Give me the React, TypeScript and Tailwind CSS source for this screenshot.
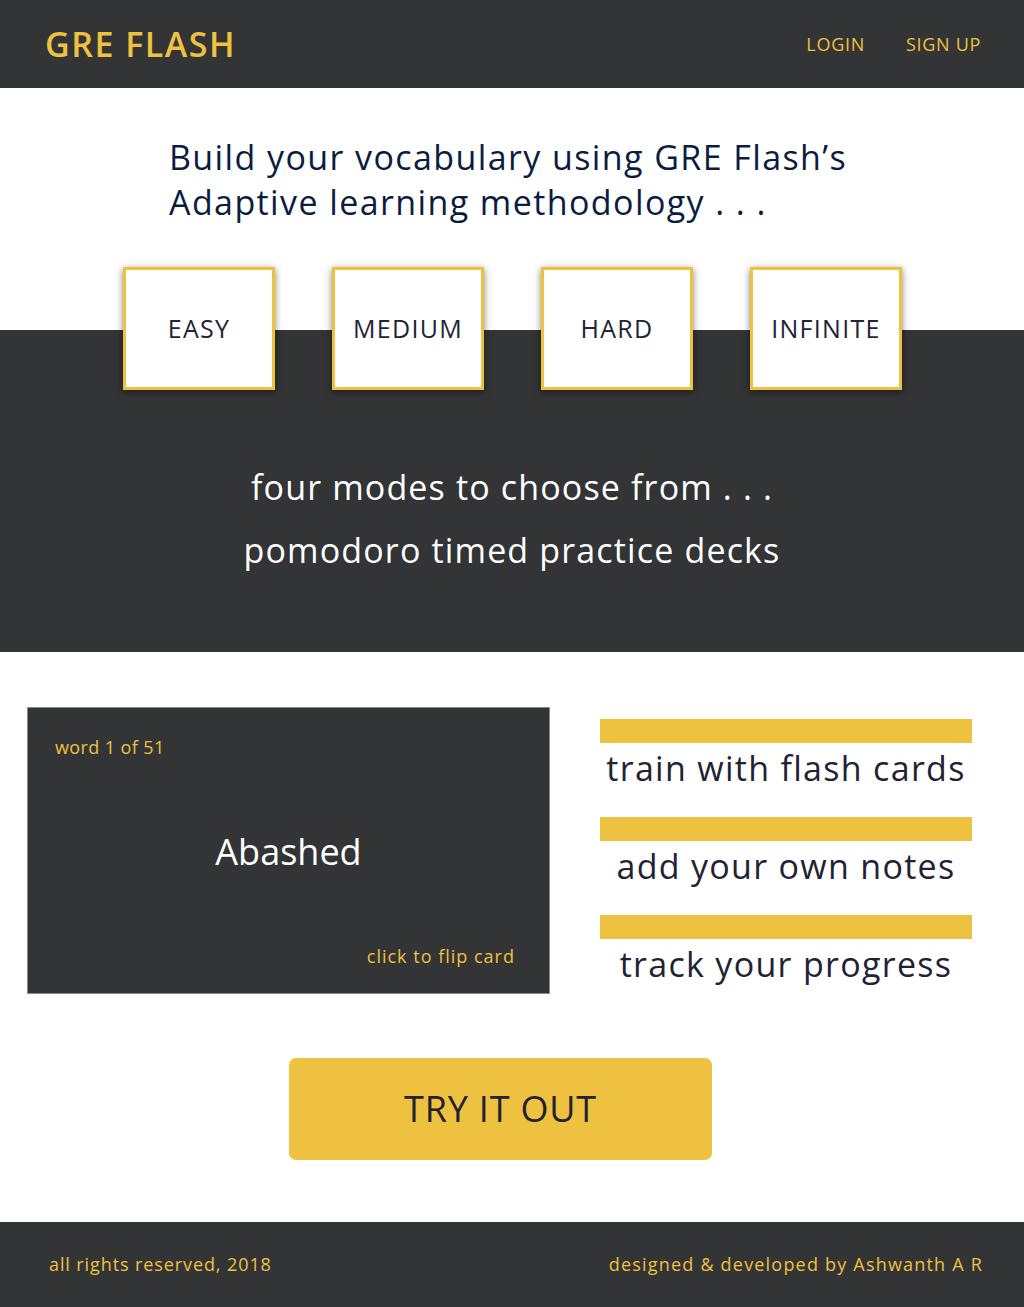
const modes = ['EASY', 'MEDIUM', 'HARD', 'INFINITE'];
const features = ['train with flash cards', 'add your own notes', 'track your progress'];

function Header() {
  return (
    <header className="h-[88px] bg-[#333436] flex items-center justify-between pl-[45px] pr-[43px]">
      <div className="text-[34px] leading-[40px] font-semibold tracking-[1.5px] text-[#eec140]">GRE FLASH</div>
      <nav className="flex items-center gap-[41px] text-[18px] tracking-[0.7px] text-[#eec140]">
        <a href="#">LOGIN</a>
        <a href="#">SIGN UP</a>
      </nav>
    </header>
  );
}

function Modes() {
  return (
    <section>
      <div className="bg-white pt-[47px] pb-[42px] pl-[169px]">
        <p className="text-[34px] leading-[45px] tracking-[1.4px] text-[#0b1d3f]">
          Build your vocabulary using GRE Flash’s
          <br />
          Adaptive learning methodology . . .
        </p>
      </div>
      <div className="bg-[linear-gradient(to_bottom,#ffffff_63px,#333436_63px)]">
        <div className="flex justify-center gap-[57px] pl-[1px]">
          {modes.map((m) => (
            <div
              key={m}
              className="w-[152px] h-[123px] bg-white border-[3px] border-[#eec140] shadow-[0_2px_7px_rgba(0,0,0,0.5)] flex items-center justify-center text-[25px] tracking-[1.3px] text-[#232336]"
            >
              {m}
            </div>
          ))}
        </div>
      </div>
      <div className="bg-[#333436] pt-[66px] pb-[70px] text-center text-white text-[34px] leading-[63px] tracking-[1.15px]">
        <p>four modes to choose from . . .</p>
        <p>pomodoro timed practice decks</p>
      </div>
    </section>
  );
}

function FlashCard() {
  return (
    <div className="w-[523px] h-[287px] bg-[#333436] border border-[#8a8a8a] flex flex-col px-[27px] pt-[27px] pb-[25px]">
      <div className="text-[18px] leading-[24px] tracking-[0.4px] text-[#eec140]">word 1 of 51</div>
      <div className="flex-1 flex items-center justify-center text-white text-[36px]">Abashed</div>
      <div className="text-right pr-[7px] text-[18px] leading-[24px] tracking-[1px] text-[#eec140]">click to flip card</div>
    </div>
  );
}

function Features() {
  return (
    <div className="w-[372px] mt-[12px] flex flex-col gap-[24px]">
      {features.map((f) => (
        <div key={f}>
          <div className="h-[24px] bg-[#eec140]" />
          <div className="text-center text-[34px] leading-[50px] tracking-[1.3px] text-[#222233]">{f}</div>
        </div>
      ))}
    </div>
  );
}

export default function App() {
  return (
    <div className="min-h-screen bg-white font-['Open_Sans','Noto_Sans',sans-serif]">
      <Header />
      <Modes />
      <section className="pt-[55px] pl-[27px] flex gap-[50px] items-start">
        <FlashCard />
        <Features />
      </section>
      <div className="flex justify-center pr-[23px] pt-[64px] pb-[62px]">
        <button className="w-[423px] h-[102px] rounded-[7px] bg-[#eec140] text-[36px] tracking-[0.8px] text-[#222233]">
          TRY IT OUT
        </button>
      </div>
      <footer className="h-[85px] bg-[#333436] flex items-center justify-between pr-[41px] pl-[49px] text-[18px] text-[#eec140]">
        <span className="tracking-[0.9px]">all rights reserved, 2018</span>
        <span className="tracking-[1.2px]">designed &amp; developed by Ashwanth A R</span>
      </footer>
    </div>
  );
}
